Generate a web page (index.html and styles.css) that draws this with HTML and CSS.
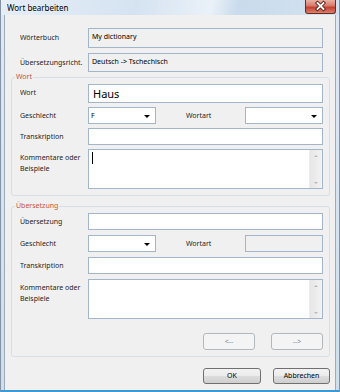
FILE: index.html
```html
<!DOCTYPE html>
<html lang="de">
<head>
    <meta charset="utf-8">
    <title>Wort bearbeiten</title>
    <link rel="stylesheet" href="styles.css">
</head>
<body>
    <div class="window">
        <div class="titlebar">
            <span class="title">Wort bearbeiten</span>
            <div class="close-btn">
                <svg width="31" height="14" viewBox="0 0 31 14">
                    <path d="M12.5 4 L18.5 10 M18.5 4 L12.5 10" stroke="#5a1d16" stroke-width="3.6" stroke-linecap="square"/>
                    <path d="M12.5 4 L18.5 10 M18.5 4 L12.5 10" stroke="#ffffff" stroke-width="1.8" stroke-linecap="square"/>
                </svg>
            </div>
        </div>
        <div class="client">
            <div class="top">
                <div class="row">
                    <span class="lbl">Wörterbuch</span>
                    <div class="box readonly h20">My dictionary</div>
                </div>
                <div class="row">
                    <span class="lbl">Übersetzungsricht.</span>
                    <div class="box readonly h19">Deutsch -&gt; Tschechisch</div>
                </div>
            </div>

            <fieldset class="group">
                <legend>Wort</legend>
                <div class="rows">
                    <div class="row">
                        <span class="lbl">Wort</span>
                        <div class="box big h19">Haus</div>
                    </div>
                    <div class="row">
                        <span class="lbl">Geschlecht</span>
                        <div class="box select small">F<span class="arrow"></span></div>
                        <span class="lbl mid">Wortart</span>
                        <div class="box select fill"><span class="arrow"></span></div>
                    </div>
                    <div class="row">
                        <span class="lbl">Transkription</span>
                        <div class="box"></div>
                    </div>
                    <div class="row">
                        <span class="lbl">Kommentare oder Beispiele</span>
                        <div class="box memo">
                            <div class="memo-text"><span class="caret"></span></div>
                            <div class="scroll"><span class="up"></span><span class="down"></span></div>
                        </div>
                    </div>
                </div>
            </fieldset>

            <fieldset class="group second">
                <legend>Übersetzung</legend>
                <div class="rows wide">
                    <div class="row">
                        <span class="lbl">Übersetzung</span>
                        <div class="box"></div>
                    </div>
                    <div class="row">
                        <span class="lbl">Geschlecht</span>
                        <div class="box select small"><span class="arrow"></span></div>
                        <span class="lbl mid">Wortart</span>
                        <div class="box fill readonly"></div>
                    </div>
                    <div class="row">
                        <span class="lbl">Transkription</span>
                        <div class="box"></div>
                    </div>
                    <div class="row">
                        <span class="lbl">Kommentare oder Beispiele</span>
                        <div class="box memo">
                            <div class="memo-text"></div>
                            <div class="scroll"><span class="up"></span><span class="down"></span></div>
                        </div>
                    </div>
                </div>
                <div class="nav">
                    <button class="btn disabled">&lt;--</button>
                    <button class="btn disabled">--&gt;</button>
                </div>
            </fieldset>

            <div class="actions">
                <button class="btn ok">OK</button>
                <button class="btn cancel">Abbrechen</button>
            </div>
        </div>
    </div>
</body>
</html>
```

FILE: styles.css
```css
body {
    margin: 0px;
    background-color: #ffffff;
    font-family: "Noto Sans", "Open Sans", sans-serif;
    font-size: 7px;
    color: #1a1a1a;
}
.window {
    width: 340px;
    height: 392px;
    box-sizing: border-box;
    display: flex;
    flex-direction: column;
    border-left: 1px solid #8393a5;
    border-right: 1px solid #8393a5;
    border-bottom: 2px solid #3a9ad6;
    background: linear-gradient(180deg, #dfe9f4 0%, #cfdeec 100%);
}
.titlebar {
    height: 15px;
    display: flex;
    align-items: flex-start;
    background: linear-gradient(100deg, #e6eef7 0%, #d5e3f1 40%, #eaf1f8 62%, #c9dbec 70%, #d3e2f0 100%);
}
.title {
    margin-left: 6px;
    margin-top: 2px;
    font-size: 8px;
    line-height: 11px;
    color: #000000;
}
.close-btn {
    margin-left: auto;
    margin-right: 3px;
    width: 31px;
    height: 14px;
    box-sizing: border-box;
    border: 1px solid #6b2a22;
    border-top: none;
    border-radius: 0 0 3px 3px;
    background: linear-gradient(180deg, #e9b0a4 0%, #d77a6b 45%, #c4402f 55%, #d8806f 100%);
}
.close-btn svg {
    display: block;
    margin: -1px 0 0 -1px;
}
.client {
    flex: 1;
    margin: 0 3px;
    border-left: 1px solid #9cabbb;
    border-right: 1px solid #9cabbb;
    background-color: #f0f0f0;
    display: flex;
    flex-direction: column;
}
.top {
    padding: 13px 12px 0 15px;
    display: flex;
    flex-direction: column;
    gap: 5px;
}
.row {
    display: flex;
    align-items: flex-start;
}
.lbl {
    width: 68px;
    flex: none;
    padding-top: 3px;
    line-height: 11px;
    white-space: nowrap;
    overflow: hidden;
    color: #1e1e1e;
}
.row .lbl:first-child {
    white-space: normal;
}
.top .row .lbl:first-child {
    white-space: nowrap;
    padding-top: 4px;
}
.lbl.mid {
    width: 59px;
    margin-left: 30px;
}
.box {
    flex: 1;
    height: 17px;
    box-sizing: border-box;
    border: 1px solid #a3b5c9;
    background-color: #ffffff;
    padding: 0 3px;
    line-height: 15px;
    color: #000000;
    position: relative;
}
.box.h20 {
    height: 20px;
    line-height: 16px;
}
.box.h19 {
    height: 19px;
}
.box.readonly {
    background-color: #f0f0f0;
}
.box.big {
    font-size: 11px;
    line-height: 17px;
    padding-left: 4px;
}
.box.small {
    flex: none;
    width: 68px;
}
.box.select {
    padding-left: 2px;
}
.arrow {
    position: absolute;
    right: 5px;
    top: 7px;
    border-left: 3px solid transparent;
    border-right: 3px solid transparent;
    border-top: 3px solid #000000;
}
.box.memo {
    height: 40px;
    padding: 0;
    display: flex;
}
.memo-text {
    flex: 1;
    padding: 2px 3px;
}
.caret {
    display: block;
    width: 1px;
    height: 12px;
    background-color: #000000;
}
.scroll {
    width: 12px;
    background: linear-gradient(90deg, #e6e6e6, #f2f2f2);
    border-left: 1px solid #ececec;
    display: flex;
    flex-direction: column;
    justify-content: space-between;
    align-items: center;
    padding: 5px 0 4px 0;
}
.up {
    border-left: 2px solid transparent;
    border-right: 2px solid transparent;
    border-bottom: 2px solid #b9b9b9;
}
.down {
    border-left: 2px solid transparent;
    border-right: 2px solid transparent;
    border-top: 2px solid #b9b9b9;
}
.group {
    margin: 0 5px 0 6px;
    padding: 2px 6px 6px 8px;
    border: 1px solid #d7dfe6;
    border-radius: 3px;
    min-width: 0;
}
.group.second {
    margin-top: 5px;
}
.group legend {
    margin-left: -5px;
    padding: 0 1px;
    font-size: 7px;
    line-height: 10px;
    color: #c8543a;
}
.rows {
    display: flex;
    flex-direction: column;
    gap: 4px;
}
.rows.wide {
    gap: 5px;
}
.nav {
    margin-top: 14px;
    display: flex;
    justify-content: flex-end;
    gap: 16px;
}
.btn {
    font-family: "Noto Sans", "Open Sans", sans-serif;
    font-size: 7px;
    line-height: 14px;
    height: 17px;
    width: 52px;
    padding: 0;
    box-sizing: border-box;
    border-radius: 3px;
    color: #000000;
}
.btn.disabled {
    border: 1px solid #b3b8bc;
    background-color: #f4f4f4;
    color: #8d8d8d;
}
.actions {
    margin-top: 11px;
    padding-right: 5px;
    display: flex;
    justify-content: flex-end;
    gap: 12px;
}
.actions .btn {
    height: 16px;
    border: 1px solid #707070;
    background: linear-gradient(180deg, #f3f3f3 0%, #ebebeb 50%, #dddddd 51%, #cfcfcf 100%);
}
.btn.ok {
    width: 58px;
}
.btn.cancel {
    width: 57px;
}
```
